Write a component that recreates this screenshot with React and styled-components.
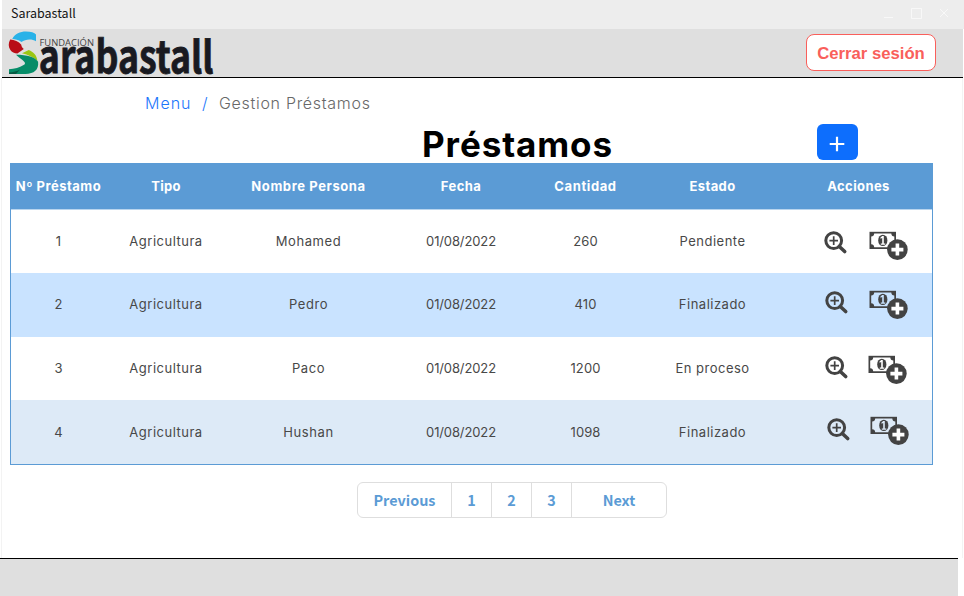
import React from "react";
import styled, { createGlobalStyle } from "styled-components";

const GlobalStyle = createGlobalStyle`
  * { box-sizing: border-box; }
  body { margin: 0; background: #fff; overflow: hidden; }
`;

const sourceSans = `"Noto Sans CJK SC", "Open Sans", sans-serif`;
const rounded = `Inter, "Open Sans", sans-serif`;

const Window = styled.div`
  width: 964px;
  height: 596px;
  display: flex;
  flex-direction: column;
  background: #fff;
`;

const TitleBar = styled.div`
  height: 29px;
  margin-left: 2px;
  flex: none;
  display: flex;
  align-items: center;
  justify-content: space-between;
  padding: 0 14px 3px 9px;
  background: #ededed;
  color: #151515;
  font: 12.5px/20px ${sourceSans};
`;

const Header = styled.header`
  height: 49px;
  margin: 0 1px 0 2px;
  flex: none;
  display: flex;
  justify-content: space-between;
  align-items: flex-start;
  background: #dfdfdf;
  border-bottom: 1px solid #000;
  padding: 0 27px 0 5px;
`;

const LogoMark = styled.svg`
  display: block;
  overflow: visible;
`;

const LogoutButton = styled.button`
  width: 130px;
  height: 37px;
  margin-top: 5px;
  padding: 2px 0 0;
  border: 1px solid #f95f5b;
  border-radius: 8px;
  background: #fff;
  color: #f95f5b;
  font: bold 16.7px/20px "Liberation Sans", sans-serif;
`;

const Page = styled.main`
  height: 480px;
  flex: none;
  margin-left: 1px;
  margin-right: 1px;
  border: solid #f3f3f3;
  border-width: 0 1px;
  padding: 0 29px 0 8px;
`;

const Breadcrumb = styled.nav`
  height: 46px;
  display: flex;
  align-items: center;
  padding: 4px 0 0 135px;
  font: 400 16px/24px ${rounded};
`;

const Crumb = styled.span`
  width: ${(p) => p.$width}px;
  flex: none;
  white-space: nowrap;
  color: ${(p) => (p.$link ? "#1b76fb" : "#686868")};
  font-weight: 300;
  letter-spacing: ${(p) => p.$tracking}px;
`;

const Heading = styled.div`
  height: 39px;
  display: grid;
  grid-template-columns: 807px 41px;
`;

const Title = styled.h1`
  margin: 0;
  padding: 0 0 0 412px;
  font: 700 35px/40px ${rounded};
  letter-spacing: 0.9px;
  color: #000;
`;

const AddButton = styled.button`
  width: 41px;
  height: 36px;
  padding: 4px 1px 0 0;
  border: 0;
  border-radius: 6px;
  background: #0d6efd;
  display: flex;
  align-items: center;
  justify-content: center;
`;

const Table = styled.div`
  width: 923px;
  height: 302px;
  border: 1px solid #5b9bd5;
`;

const Row = styled.div`
  height: ${(p) => p.$height}px;
  display: grid;
  grid-template-columns: 95px 120px 165px 140px 109px 145px 147px;
  align-items: center;
  background: ${(p) => p.$background};
  color: #484848;
  font: 400 13px/20px ${rounded};
`;

const HeadRow = styled(Row)`
  color: #fff;
  font-weight: 700;
  border-bottom: 1px solid #b9d5ee;
`;

const Cell = styled.div`
  text-align: center;
  white-space: nowrap;
  padding-bottom: ${(p) => p.$lift || 2}px;
  letter-spacing: ${(p) => p.$tracking || 0}px;
`;

const Actions = styled.div`
  align-self: start;
  display: flex;
  align-items: flex-start;
  gap: ${(p) => p.$gap}px;
  padding-left: ${(p) => p.$left}px;
`;

const IconSlot = styled.span`
  display: flex;
  padding-top: ${(p) => p.$top}px;
`;

const Pagination = styled.nav`
  width: 310px;
  height: 36px;
  margin: 17px 0 0 347px;
  display: grid;
  grid-template-columns: 94px 40px 40px 40px 1fr;
  border: 1px solid #dedede;
  border-radius: 6px;
  color: #5b9bd5;
`;

const PageLink = styled.span`
  display: flex;
  align-items: center;
  justify-content: center;
  font: 700 14.4px/20px ${sourceSans};
  border-right: ${(p) => (p.$last ? "0" : "1px solid #dedede")};
`;

const Footer = styled.footer`
  flex: 1;
  width: 958px;
  background: #dfdfdf;
  border-top: 1px solid #000;
`;

function Logo() {
  return (
    <LogoMark width="230" height="48" viewBox="7 29 230 48" role="img" aria-label="Fundación Sarabastall">
      <path d="M12.3 39C15 33.5 20 31.6 26 31.6c5 0 8.5 1.3 10 2.9v6.7C32 38.5 25 39 21.5 42c-3.2-2.3-6.3-3-9.2-3z" fill="#29b2e8" />
      <path d="M10.2 39.5c4.2.2 8.5 2 11.1 5.2 0 1.4.9 2.9 2.5 4.3l-6.4 4.4c-3-.1-5.6-1.5-7-3.5-2.2-3-2.2-6.9-.2-10.4z" fill="#b90d16" />
      <path d="M22 53.3 28.8 50c4.5 1.8 8 5 8.6 10.7-4-3.6-9.3-5.9-15.4-7.4z" fill="#9bc613" />
      <path d="M16 54.8c11 0 19.5 2.5 22.1 7C39 70 34 73.8 25.5 74H9v-4.8c5.3-.2 10.8-2 15.5-4.8 2.5-2-4.3-5.6-8.5-9.6z" fill="#078c68" />
      <path d="M9 72.5c4-.2 8-1.3 11-3l-4 4.4H9z" fill="#075a43" />
      <text x="39.5" y="45.6" textLength="54.5" lengthAdjust="spacingAndGlyphs" fill="#444" fontFamily={`"Open Sans", sans-serif`} fontSize="9.8">FUNDACIÓN</text>
      <text x="38.8" y="73.1" textLength="174.8" lengthAdjust="spacingAndGlyphs" fill="#191a21" stroke="#191a21" strokeWidth=".8" fontFamily={sourceSans} fontWeight="700" fontSize="44">arabastall</text>
    </LogoMark>
  );
}

function WindowControls() {
  return (
    <svg width="66" height="12" viewBox="0 0 66 12" fill="none" stroke="#f8f8f8">
      <path d="M0 10.5h9M27.5 1.5h10v10h-10zM56 2l8 8M64 2l-8 8" />
    </svg>
  );
}

function ZoomIcon() {
  return (
    <svg width="24" height="24" viewBox="0 0 24 24" fill="none" stroke="#434343">
      <circle cx="9.7" cy="9.6" r="7.9" strokeWidth="3" />
      <path d="m15.3 15.5 5.4 5" strokeWidth="3.6" strokeLinecap="round" />
      <path d="M5.4 9.6H14M9.7 5.3v8.6" strokeWidth="1.7" />
    </svg>
  );
}

function MoneyIcon({ paper }) {
  return (
    <svg width="40" height="30" viewBox="0 0 40 30">
      <path d="M.5.8H27v17.2H.5z" fill="#434343" />
      <path d="M5.2 2.4h17.1c.1 2 1.1 3 3 3.1v7.8c-1.9.1-2.9 1-3 3H5.2c-.1-2-1.1-2.9-3-3V5.5c1.9-.1 2.9-1.1 3-3.1z" fill={paper} />
      <ellipse cx="13.8" cy="9.4" rx="4.6" ry="5.7" fill="#434343" />
      <path d="M11.5 6.4 13.2 5h1.6v7.4h1.5v1.3h-4.5v-1.3h1.4V7.1l-1.7.7z" fill={paper} />
      <circle cx="28.4" cy="18.6" r="10.3" fill="#434343" />
      <path d="M28.4 12.6v12M22.4 18.6h12" stroke="#fff" strokeWidth="3.6" />
    </svg>
  );
}

const columns = [
  ["Nº Préstamo", 0.5],
  ["Tipo", 0.3],
  ["Nombre Persona", 0.6],
  ["Fecha", 0.4],
  ["Cantidad", 0.6],
  ["Estado", 0.4],
  ["Acciones", 0.4],
];

const cellTracking = [0, 0.5, 0.6, -0.12, 0.1, 0.5];

const loans = [
  { cells: ["1", "Agricultura", "Mohamed", "01/08/2022", "260", "Pendiente"], background: "#fff", height: 63, zoomTop: 21, moneyTop: 21, left: 39, gap: 21, lift: 2 },
  { cells: ["2", "Agricultura", "Pedro", "01/08/2022", "410", "Finalizado"], background: "#c9e3ff", height: 64, zoomTop: 18, moneyTop: 17, left: 40, gap: 20, lift: 2 },
  { cells: ["3", "Agricultura", "Paco", "01/08/2022", "1200", "En proceso"], background: "#fff", height: 63, zoomTop: 19, moneyTop: 18, left: 40, gap: 19, lift: 2 },
  { cells: ["4", "Agricultura", "Hushan", "01/08/2022", "1098", "Finalizado"], background: "#ddeaf7", height: 64, zoomTop: 18, moneyTop: 16, left: 42, gap: 19, lift: 1 },
];

export default function App() {
  return (
    <Window>
      <GlobalStyle />
      <TitleBar>
        <span>Sarabastall</span>
        <WindowControls />
      </TitleBar>
      <Header>
        <Logo />
        <LogoutButton>Cerrar sesión</LogoutButton>
      </Header>
      <Page>
        <Breadcrumb>
          <Crumb $link $width={57} $tracking={1}>Menu</Crumb>
          <Crumb $link $width={17} $tracking={0}>/</Crumb>
          <Crumb $width={160} $tracking={0.7}>Gestion Préstamos</Crumb>
        </Breadcrumb>
        <Heading>
          <Title>Préstamos</Title>
          <AddButton aria-label="Añadir préstamo">
            <svg width="16" height="16" viewBox="0 0 16 16" stroke="#fff" strokeWidth="2.2">
              <path d="M8 .7v14.6M.7 8h14.6" />
            </svg>
          </AddButton>
        </Heading>
        <Table>
          <HeadRow $height={46} $background="#5b9bd5">
            {columns.map(([label, tracking]) => (
              <Cell key={label} $tracking={tracking}>{label}</Cell>
            ))}
          </HeadRow>
          {loans.map((loan) => (
            <Row key={loan.cells[0]} $height={loan.height} $background={loan.background}>
              {loan.cells.map((text, i) => (
                <Cell key={i} $tracking={cellTracking[i]} $lift={loan.lift}>{text}</Cell>
              ))}
              <Actions $left={loan.left} $gap={loan.gap}>
                <IconSlot $top={loan.zoomTop}><ZoomIcon /></IconSlot>
                <IconSlot $top={loan.moneyTop}><MoneyIcon paper={loan.background} /></IconSlot>
              </Actions>
            </Row>
          ))}
        </Table>
        <Pagination>
          <PageLink>Previous</PageLink>
          <PageLink>1</PageLink>
          <PageLink>2</PageLink>
          <PageLink>3</PageLink>
          <PageLink $last>Next</PageLink>
        </Pagination>
      </Page>
      <Footer />
    </Window>
  );
}
